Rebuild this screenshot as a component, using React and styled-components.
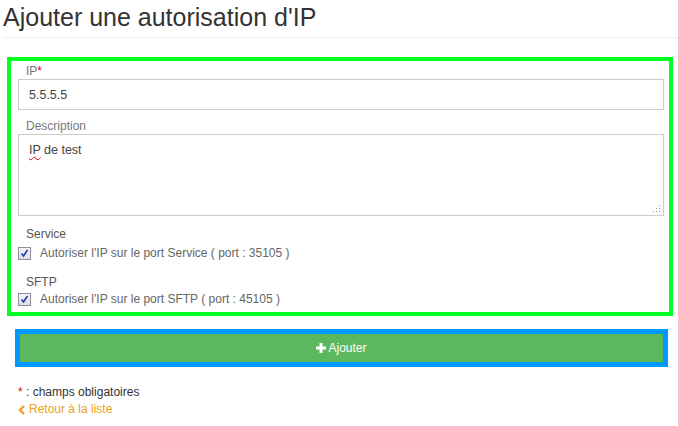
import React from "react";
import styled, { createGlobalStyle } from "styled-components";

const Global = createGlobalStyle`
  html, body { margin: 0; padding: 0; background: #fff; }
  body { font-family: "Liberation Sans", Arial, sans-serif; color: #333; font-size: 12px; }
  *, *::before, *::after { box-sizing: border-box; }
`;

const Page = styled.div`
  padding: 0 0 0 3px;
  width: 678px;
`;

const Title = styled.h1`
  margin: 0;
  padding-top: 3px;
  font-size: 25px;
  font-weight: normal;
  line-height: 29px;
  color: #333;
`;

const Rule = styled.hr`
  margin: 5px 0 0 0;
  border: 0;
  border-top: 1px solid #eee;
`;

const FormBox = styled.div`
  margin: 19px 0 0 4px;
  width: 666px;
  border: 4px solid #00ff22;
  padding: 3px 5px 6px 7px;
  display: flex;
  flex-direction: column;
`;

const Label = styled.div`
  padding-left: 8px;
  color: ${(p) => (p.dark ? "#555" : "#777")};
  font-size: 12px;
  line-height: 14px;
  margin-top: ${(p) => p.top || 0}px;
  margin-bottom: ${(p) => p.bottom || 0}px;
`;

const Star = styled.span`
  color: #e00;
`;

const Input = styled.div`
  height: 31px;
  border: 1px solid #ccc;
  padding: 0 10px;
  display: flex;
  align-items: center;
  color: #444;
  font-size: 12.5px;
`;

const TextArea = styled.div`
  position: relative;
  height: 82px;
  border: 1px solid #ccc;
  padding: 8px 10px;
  line-height: 15px;
  color: #444;
  font-size: 12.5px;
`;

const Squiggle = styled.span`
  text-decoration: underline wavy #e00;
  text-decoration-thickness: 1px;
  text-underline-offset: 2px;
`;

const Grip = styled.svg`
  position: absolute;
  right: 2px;
  bottom: 2px;
`;

const CheckRow = styled.div`
  display: flex;
  align-items: center;
  gap: 9px;
  height: 14px;
  color: #666;
  font-size: 12px;
`;

const Box = styled.span`
  width: 13px;
  height: 13px;
  border: 1px solid #8f8f9d;
  background: linear-gradient(#f4f4f6, #dcdce4);
  display: flex;
  align-items: center;
  justify-content: center;
`;

const ButtonWrap = styled.div`
  margin: 13px 0 0 12px;
  width: 653px;
  border: 5px solid #0099ff;
`;

const Button = styled.div`
  height: 28px;
  background: #5cb85c;
  color: #fff;
  display: flex;
  align-items: center;
  justify-content: center;
  gap: 2px;
  font-size: 12px;
`;

const Footer = styled.div`
  margin: 17px 0 0 15px;
  line-height: 17px;
  font-size: 12px;
`;

const Back = styled.div`
  color: #f0a020;
  display: flex;
  align-items: center;
  gap: 3px;
`;

function Check() {
  return (
    <Box>
      <svg width="9" height="9" viewBox="0 0 9 9">
        <path d="M1.5 4.5 L3.5 7 L7.5 1" fill="none" stroke="#1c3fa8" strokeWidth="1.6" />
      </svg>
    </Box>
  );
}

export default function App() {
  return (
    <Page>
      <Global />
      <Title>Ajouter une autorisation d'IP</Title>
      <Rule />
      <FormBox>
        <Label bottom={1}>
          IP<Star>*</Star>
        </Label>
        <Input>5.5.5.5</Input>
        <Label top={9} bottom={1}>Description</Label>
        <TextArea>
          <Squiggle>IP</Squiggle> de test
          <Grip width="8" height="8" viewBox="0 0 8 8">
            <g fill="#999">
              <rect x="6" y="0" width="1" height="1" />
              <rect x="3" y="3" width="1" height="1" />
              <rect x="6" y="3" width="1" height="1" />
              <rect x="0" y="6" width="1" height="1" />
              <rect x="3" y="6" width="1" height="1" />
              <rect x="6" y="6" width="1" height="1" />
            </g>
          </Grip>
        </TextArea>
        <Label top={11} bottom={5} dark>Service</Label>
        <CheckRow>
          <Check />
          Autoriser l'IP sur le port Service ( port : 35105 )
        </CheckRow>
        <Label top={15} bottom={3} dark>SFTP</Label>
        <CheckRow>
          <Check />
          Autoriser l'IP sur le port SFTP ( port : 45105 )
        </CheckRow>
      </FormBox>
      <ButtonWrap>
        <Button>
          <svg width="10" height="10" viewBox="0 0 10 10">
            <path d="M3.5 0h3v3.5H10v3H6.5V10h-3V6.5H0v-3h3.5z" fill="#fff" />
          </svg>
          Ajouter
        </Button>
      </ButtonWrap>
      <Footer>
        <div>
          <Star>*</Star> : champs obligatoires
        </div>
        <Back>
          <svg width="8" height="10" viewBox="0 0 8 10">
            <path d="M6 1 L2 5 L6 9" fill="none" stroke="#f0a020" strokeWidth="2.4" />
          </svg>
          Retour à la liste
        </Back>
      </Footer>
    </Page>
  );
}
